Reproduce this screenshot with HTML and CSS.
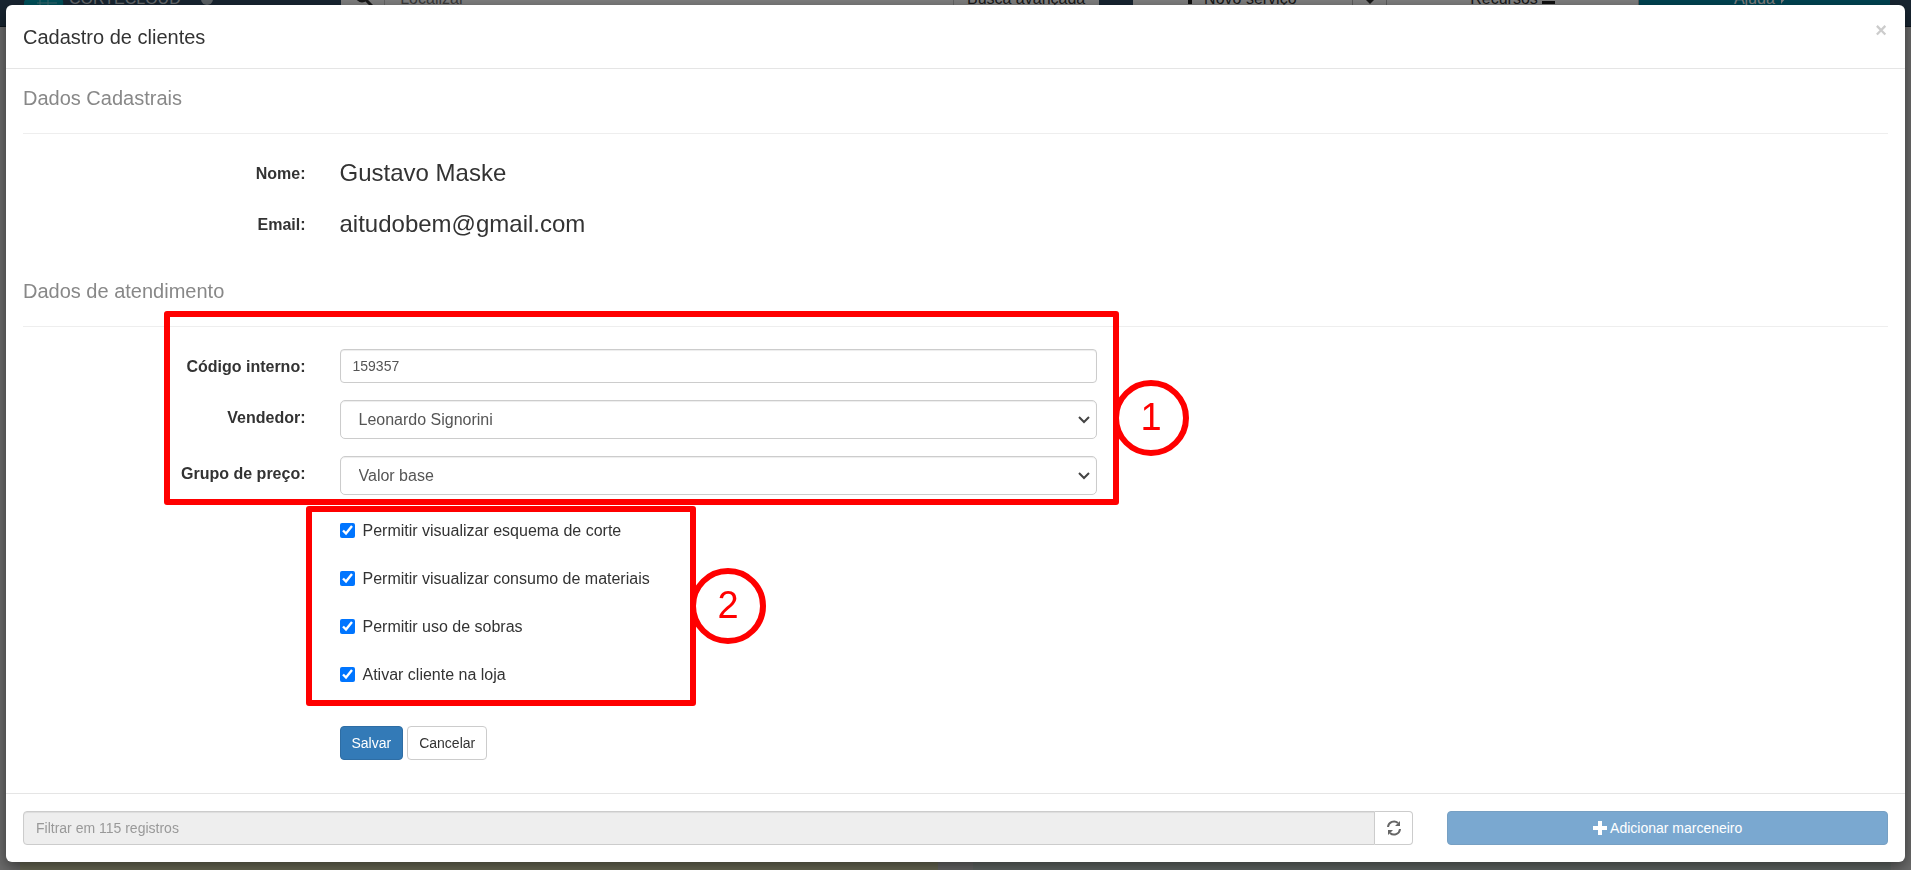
FILE: index.html
```html
<!DOCTYPE html>
<html lang="pt-br">
<head>
    <meta charset="UTF-8">
    <title>Cadastro de clientes</title>
    <link rel="stylesheet" href="styles.css">
</head>
<body>
    <div class="page">
        <header class="topbar">
            <div class="brand-area">
                <a href="#" class="brand">
                    <svg width="40" height="34" viewBox="0 0 40 34">
                        <path d="M9 32a9 9 0 0 1-1-18 12 12 0 0 1 23-3 11 11 0 0 1 1 21z" fill="#00a0b4"/>
                        <path d="M13 21h20M13 27h20M16 14v18M24 12v20" stroke="#7fd0dc" stroke-width="1"/>
                    </svg>
                    <span>CORTECLOUD</span>
                </a>
                <span class="status-dot"></span>
            </div>
            <div class="search">
                <span class="search-icon">
                    <svg width="18" height="18" viewBox="0 0 18 18" fill="none" stroke="#333" stroke-width="3">
                        <circle cx="7" cy="7" r="5"/>
                        <path d="M11 11l6 6"/>
                    </svg>
                </span>
                <input type="text" placeholder="Localizar" aria-label="Localizar">
                <button type="button">Busca avançada</button>
            </div>
            <div class="top-actions">
                <button type="button" class="novo"><b class="bar"></b>Novo serviço</button>
                <button type="button" class="caret" aria-label="Mais opções">
                    <svg width="8" height="4" viewBox="0 0 8 4" fill="#333"><path d="M0 0h8L4 4z"/></svg>
                </button>
                <button type="button" class="recursos">Recursos <b class="dash"></b></button>
                <button type="button" class="ajuda">Ajuda
                    <svg width="16" height="14" viewBox="0 0 16 14" fill="#fff"><path d="M0 0h16v9H6l-4 5V9H0z"/></svg>
                </button>
            </div>
        </header>
        <main class="panels">
            <div class="panel panel-yellow"></div>
            <div class="panel panel-green"></div>
        </main>
    </div>

    <div class="backdrop">
        <div class="modal" role="dialog" aria-labelledby="modalTitle">
            <div class="modal-header">
                <h4 id="modalTitle">Cadastro de clientes</h4>
                <button type="button" class="close" aria-label="Fechar">×</button>
            </div>

            <form class="modal-body">
                <h5 class="legend">Dados Cadastrais</h5>
                <div class="row">
                    <span class="label">Nome:</span>
                    <p class="static">Gustavo Maske</p>
                </div>
                <div class="row">
                    <span class="label">Email:</span>
                    <p class="static">aitudobem@gmail.com</p>
                </div>

                <h5 class="legend legend-second">Dados de atendimento</h5>
                <div class="group">
                    <div class="row">
                        <label class="label" for="codigo">Código interno:</label>
                        <input type="text" id="codigo" class="field" value="159357">
                    </div>
                    <div class="row">
                        <label class="label" for="vendedor">Vendedor:</label>
                        <select id="vendedor" class="field">
                            <option>Leonardo Signorini</option>
                        </select>
                    </div>
                    <div class="row">
                        <label class="label" for="grupo">Grupo de preço:</label>
                        <select id="grupo" class="field">
                            <option>Valor base</option>
                        </select>
                    </div>
                    <div class="mark mark-fields"><span class="mark-number">1</span></div>
                </div>

                <div class="group">
                    <div class="row">
                        <label class="check"><input type="checkbox" checked>Permitir visualizar esquema de corte</label>
                    </div>
                    <div class="row">
                        <label class="check"><input type="checkbox" checked>Permitir visualizar consumo de materiais</label>
                    </div>
                    <div class="row">
                        <label class="check"><input type="checkbox" checked>Permitir uso de sobras</label>
                    </div>
                    <div class="row">
                        <label class="check"><input type="checkbox" checked>Ativar cliente na loja</label>
                    </div>
                    <div class="mark mark-checks"><span class="mark-number">2</span></div>
                </div>

                <div class="row row-buttons">
                    <div class="buttons">
                        <button type="submit" class="btn btn-primary">Salvar</button>
                        <button type="button" class="btn">Cancelar</button>
                    </div>
                </div>
            </form>

            <div class="modal-footer">
                <div class="filter">
                    <input type="text" placeholder="Filtrar em 115 registros" aria-label="Filtrar registros" disabled>
                    <button type="button" class="btn" aria-label="Atualizar">
                        <svg width="14" height="16" viewBox="0 0 14 16" fill="none" stroke="#666" stroke-width="2">
                            <path d="M1 7a6 6 0 0 1 10-4M13 9a6 6 0 0 1-10 4"/>
                            <path d="M13 1v5H8zM1 15v-5h5z" fill="#666" stroke="none"/>
                        </svg>
                    </button>
                </div>
                <button type="button" class="btn btn-primary btn-add" disabled>
                    <svg width="14" height="14" viewBox="0 0 14 14" fill="#fff"><path d="M5 0h4v5h5v4H9v5H5V9H0V5h5z"/></svg>
                    Adicionar marceneiro
                </button>
            </div>
        </div>
    </div>
</body>
</html>
```

FILE: styles.css
```css
* {
    box-sizing: border-box;
}

body {
    margin: 0;
    font-family: "Liberation Sans", Arial, sans-serif;
    font-size: 16px;
    line-height: 23px;
    color: #333;
}

button, input, select {
    font-family: inherit;
    font-size: 14px;
    margin: 0;
}

h4, h5, p {
    margin: 0;
    font-weight: normal;
}

/* Fundo: a página atrás do modal */
.page {
    display: flex;
    flex-direction: column;
    height: 100vh;
    overflow: hidden;
    background-color: #d8d8d8;
}

.topbar {
    display: flex;
    flex-shrink: 0;
    align-items: center;
    height: 56px;
    margin-top: -29px;
    padding: 0 21px 0 24px;
    background-color: #304a62;
    border-bottom: 1px solid #182838;
}

.brand-area {
    display: flex;
    align-items: center;
    gap: 20px;
    width: 17%;
}

.brand {
    display: flex;
    align-items: center;
    gap: 5px;
    color: #ccd4da;
    font-size: 16px;
    text-decoration: none;
}

.status-dot {
    width: 12px;
    height: 12px;
    border-radius: 50%;
    background-color: #b8c4cc;
}

.search {
    display: flex;
    flex: 1;
    height: 38px;
    background-color: #fff;
}

.search-icon {
    width: 44px;
    padding: 9px 14px;
    border-right: 1px solid #ccc;
}

.search input {
    flex: 1;
    min-width: 0;
    padding: 0 15px;
    border: 0;
    font-size: 16px;
}

.search button {
    width: 146px;
    border: 0;
    border-left: 1px solid #ccc;
    background-color: #fff;
    font-size: 16px;
    color: #333;
}

.top-actions {
    display: flex;
    flex: 1;
    height: 38px;
    margin-left: 34px;
}

.top-actions button {
    border: 0;
    border-right: 1px solid #bbb;
    background-color: #fff;
    font-size: 16px;
    color: #333;
}

.top-actions .novo {
    flex: 218;
}

.top-actions .caret {
    flex: 35;
    padding: 0;
}

.top-actions .recursos,
.top-actions .ajuda {
    flex: 251;
}

.top-actions .ajuda {
    border: 0;
    background-color: #0087a4;
    color: #fff;
}

.bar {
    display: inline-block;
    width: 4px;
    height: 12px;
    margin-right: 12px;
    background-color: #222;
}

.dash {
    display: inline-block;
    width: 13px;
    height: 3px;
    background-color: #222;
}

.panels {
    display: flex;
    flex: 1;
    gap: 35px;
    padding: 20px 20px 0;
}

.panel {
    flex: 1;
}

.panel-yellow {
    background-color: #dcdcb0;
}

.panel-green {
    background-color: #c8d6d0;
}

/* Modal */
.backdrop {
    position: fixed;
    inset: 0;
    padding: 5px 6px;
    background-color: rgba(0,0,0,0.5);
    overflow: hidden;
}

.modal {
    background-color: #fff;
    border-radius: 6px;
    box-shadow: 0 5px 15px rgba(0,0,0,0.5);
}

.modal-header {
    display: flex;
    justify-content: space-between;
    align-items: flex-start;
    padding: 18px 18px 17px 17px;
    border-bottom: 1px solid #e5e5e5;
}

.modal-header h4 {
    font-size: 20px;
    line-height: 28px;
}

.close {
    padding: 0;
    border: 0;
    background: none;
    color: #ccc;
    font-size: 20px;
    font-weight: bold;
    line-height: 14px;
    cursor: pointer;
}

.modal-body {
    padding: 15px 17px 33px;
}

.legend {
    margin-bottom: 22px;
    padding-bottom: 21px;
    border-bottom: 1px solid #eee;
    color: #888;
    font-size: 20px;
    line-height: 28px;
}

.legend-second {
    margin-top: 36px;
}

.group {
    position: relative;
}

.row {
    display: grid;
    grid-template-columns: repeat(12, 1fr);
    margin: 0 -17px 17px;
}

.label {
    grid-column: span 2;
    padding: 8px 17px 0;
    font-weight: bold;
    line-height: 20px;
    text-align: right;
}

.static {
    grid-column: 3 / span 9;
    padding: 0 17px;
    font-size: 24px;
    line-height: 34px;
}

.field {
    grid-column: 3 / span 5;
    height: 34px;
    margin: 0 17px;
    padding: 0 12px;
    border: 1px solid #ccc;
    border-radius: 4px;
    background-color: #fff;
    box-shadow: inset 0 1px 1px rgba(0,0,0,0.075);
    color: #555;
}

select.field {
    height: 39px;
    padding: 0 18px;
    border-radius: 5px;
    font-size: 16px;
    appearance: none;
    background-image: url("data:image/svg+xml,%3Csvg xmlns='http://www.w3.org/2000/svg' width='12' height='8' fill='none' stroke='%23444' stroke-width='2'%3E%3Cpath d='M1 1l5 5 5-5'/%3E%3C/svg%3E");
    background-repeat: no-repeat;
    background-position: right 6px center;
}

.check {
    grid-column: 3 / span 5;
    display: flex;
    align-items: center;
    gap: 8px;
    padding: 7px 17px 1px;
}

.check input {
    width: 15px;
    height: 15px;
    accent-color: #0075ff;
}

.row-buttons {
    margin-top: 39px;
    margin-bottom: 0;
}

.buttons {
    grid-column: 3 / span 5;
    display: flex;
    gap: 4px;
    padding: 0 17px;
}

.btn {
    height: 34px;
    padding: 0 11px;
    border: 1px solid #ccc;
    border-radius: 4px;
    background-color: #fff;
    color: #333;
    font-size: 14px;
    cursor: pointer;
}

.btn-primary {
    border-color: #2e6da4;
    background-color: #337ab7;
    color: #fff;
}

/* Marcas vermelhas numeradas */
.mark {
    position: absolute;
    border: 6px solid #f00;
    border-radius: 3px;
    pointer-events: none;
}

.mark-fields {
    top: -38px;
    bottom: -10px;
    left: 141px;
    width: 955px;
}

.mark-checks {
    top: -6px;
    bottom: -19px;
    left: 283px;
    width: 390px;
}

.mark-number {
    position: absolute;
    top: 50%;
    left: 100%;
    width: 76px;
    height: 76px;
    margin-top: -38px;
    border: 6px solid #f00;
    border-radius: 50%;
    color: #f00;
    font-size: 38px;
    line-height: 63px;
    text-align: center;
}

.mark-fields .mark-number {
    margin-top: -28px;
}

.modal-footer {
    display: grid;
    grid-template-columns: 3fr 1fr;
    padding: 17px 0;
    border-top: 1px solid #e5e5e5;
}

.filter {
    display: flex;
    margin: 0 17px;
}

.filter input {
    flex: 1;
    min-width: 0;
    height: 34px;
    padding: 0 12px;
    border: 1px solid #ccc;
    border-radius: 4px 0 0 4px;
    background-color: #eee;
    box-shadow: inset 0 1px 1px rgba(0,0,0,0.075);
}

.filter input::placeholder {
    color: #999;
}

.filter .btn {
    width: 38px;
    padding: 0;
    border-left: 0;
    border-radius: 0 4px 4px 0;
}

.filter svg,
.btn-add svg {
    vertical-align: -2px;
}

.btn-add {
    margin: 0 17px;
    opacity: 0.65;
}
```
